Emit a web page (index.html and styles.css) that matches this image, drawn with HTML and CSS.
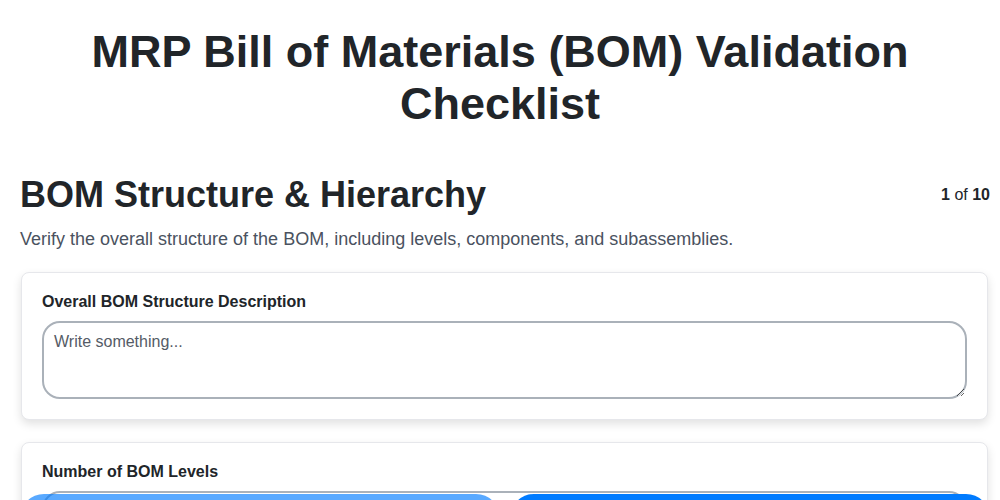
FILE: index.html
```html
<!DOCTYPE html>
<html lang="en">
<head>
  <meta charset="UTF-8">
  <meta name="viewport" content="width=device-width, initial-scale=1.0">
  <title>MRP Bill of Materials (BOM) Validation Checklist</title>
  <link rel="stylesheet" href="styles.css">
</head>
<body>
  <h1 class="title">MRP Bill of Materials (BOM) Validation Checklist</h1>

  <div class="page">
    <div class="section-head">
      <h2>BOM Structure &amp; Hierarchy</h2>
      <div class="counter"><strong>1</strong> of <strong>10</strong></div>
    </div>
    <p class="section-desc">Verify the overall structure of the BOM, including levels, components, and subassemblies.</p>

    <div class="card">
      <label for="structure">Overall BOM Structure Description</label>
      <textarea id="structure" placeholder="Write something..."></textarea>
    </div>

    <div class="card">
      <label for="levels">Number of BOM Levels</label>
      <input type="number" id="levels">
    </div>
  </div>

  <div class="nav">
    <button class="btn" disabled>Previous</button>
    <button class="btn">Next</button>
  </div>
</body>
</html>
```

FILE: styles.css
```css
body {
  font-family: "Liberation Sans", Arial, sans-serif;
  margin: 0;
  padding: 0;
  background-color: #fff;
  color: #212529;
}
.title {
  font-size: 45px;
  line-height: 52px;
  text-align: center;
  margin: 26px 80px 0;
}
.page {
  padding: 0 10px 0 20px;
  margin-top: 43px;
}
.section-head {
  display: flex;
  justify-content: space-between;
  align-items: center;
}
.section-head h2 {
  font-size: 36px;
  line-height: 44px;
  margin: 0;
}
.counter {
  font-size: 16px;
}
.section-desc {
  font-size: 18px;
  color: #4a5260;
  margin: 12px 0 22px;
}
.card {
  background: #fff;
  border: 1px solid #e6e7eb;
  border-radius: 8px;
  box-shadow: 0 4px 10px rgba(0, 0, 0, 0.12);
  padding: 20px;
  margin: 0 2px 22px 1px;
}
.card label {
  display: block;
  font-weight: bold;
  font-size: 16px;
  margin-bottom: 10px;
}
.card textarea,
.card input {
  display: block;
  width: 100%;
  box-sizing: border-box;
  border: 2px solid #aab1b9;
  border-radius: 18px;
  padding: 10px;
  font-family: "Liberation Sans", Arial, sans-serif;
  font-size: 16px;
}
.card textarea {
  height: 78px;
}
.card textarea::placeholder {
  color: #555b66;
}
.card input {
  height: 46px;
}
.nav {
  position: fixed;
  left: 20px;
  right: 10px;
  bottom: -42px;
  display: flex;
  gap: 10px;
}
.btn {
  flex: 1;
  height: 48px;
  border: none;
  border-radius: 24px;
  background-color: #007bff;
  color: white;
  font-size: 16px;
  cursor: pointer;
}
.btn:disabled {
  opacity: 0.65;
}
```
